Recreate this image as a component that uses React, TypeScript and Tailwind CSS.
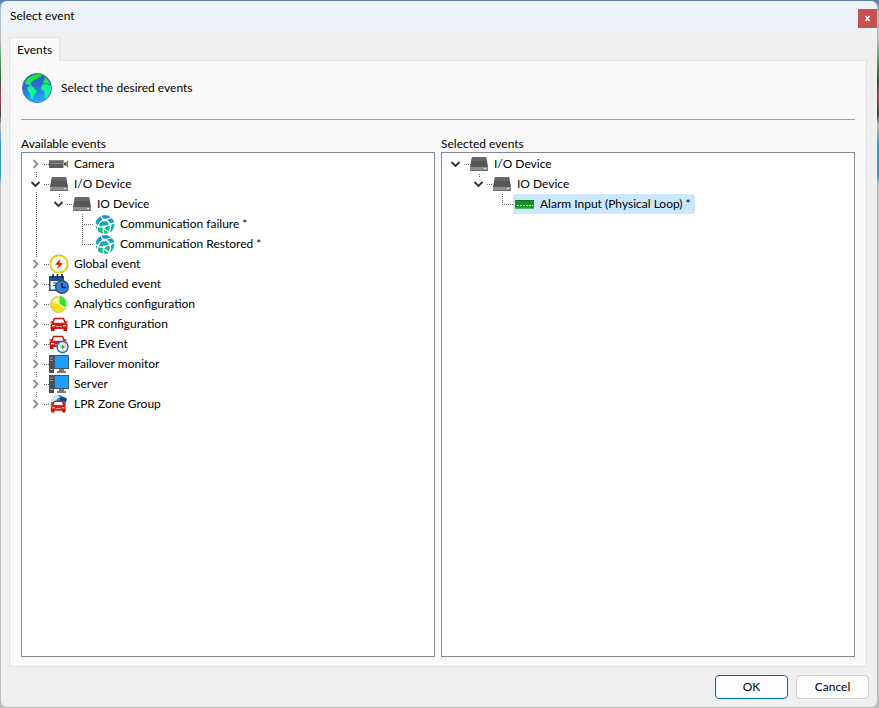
import React, { useState } from 'react';
import clsx from 'clsx';

type IconName =
  | 'camera'
  | 'device'
  | 'network'
  | 'global'
  | 'scheduled'
  | 'analytics'
  | 'car'
  | 'carEvent'
  | 'server'
  | 'carZone'
  | 'input';

type TreeItem = {
  id: string;
  label: string;
  icon: IconName;
  children?: TreeItem[];
};

const AVAILABLE: TreeItem[] = [
  { id: 'camera', label: 'Camera', icon: 'camera', children: [] },
  {
    id: 'io',
    label: 'I/O Device',
    icon: 'device',
    children: [
      {
        id: 'io-1',
        label: 'IO Device',
        icon: 'device',
        children: [
          { id: 'failure', label: 'Communication failure *', icon: 'network' },
          { id: 'restored', label: 'Communication Restored *', icon: 'network' },
        ],
      },
    ],
  },
  { id: 'global', label: 'Global event', icon: 'global', children: [] },
  { id: 'scheduled', label: 'Scheduled event', icon: 'scheduled', children: [] },
  { id: 'analytics', label: 'Analytics configuration', icon: 'analytics', children: [] },
  { id: 'lpr', label: 'LPR configuration', icon: 'car', children: [] },
  { id: 'lpr-event', label: 'LPR Event', icon: 'carEvent', children: [] },
  { id: 'failover', label: 'Failover monitor', icon: 'server', children: [] },
  { id: 'server', label: 'Server', icon: 'server', children: [] },
  { id: 'zone', label: 'LPR Zone Group', icon: 'carZone', children: [] },
];

const SELECTED: TreeItem[] = [
  {
    id: 'io',
    label: 'I/O Device',
    icon: 'device',
    children: [
      {
        id: 'io-1',
        label: 'IO Device',
        icon: 'device',
        children: [{ id: 'alarm', label: 'Alarm Input (Physical Loop) *', icon: 'input' }],
      },
    ],
  },
];

function GlobeIcon() {
  return (
    <svg className="size-8 shrink-0" viewBox="0 0 32 32">
      <defs>
        <linearGradient id="sea" x1="0" y1="0" x2="0.2" y2="1">
          <stop offset="0" stopColor="#2c4fae" />
          <stop offset="0.5" stopColor="#2a6fd0" />
          <stop offset="1" stopColor="#22a8ff" />
        </linearGradient>
        <linearGradient id="land" gradientUnits="userSpaceOnUse" x1="0" y1="2" x2="0" y2="28">
          <stop offset="0" stopColor="#1fe02c" />
          <stop offset="0.45" stopColor="#12f480" />
          <stop offset="1" stopColor="#08fca8" />
        </linearGradient>
      </defs>
      <circle cx="16" cy="16" r="14.6" fill="url(#sea)" stroke="#56749c" strokeWidth="0.9" />
      <g fill="url(#land)">
        <path d="M4 10 7 6l5-3 5-1 4 1-1 2-3 .5-1 1.500-3 .5-1 2-2 .5L9 12l2 1.500-1 .5-3-2-1.500 1z" />
        <path d="M7 14.500 10 14l3 1.500 1 2 2 1-1 3-2 1.500-1 3-1.500 1.500-1-2-.5-4L7 19l-.5-2.500z" />
        <path d="M23 5l2.500 1.500L28 10l.8 2-2.300-.5L25 11l-2 .5-1-2 1.500-1.500z" />
        <path d="M21 13l3-1.500 3 1 3 1.500.3 3-1.300 3.500-2 4L25 27l-1.500-1 .5-4-1-3-2-1-1-2.500z" />
      </g>
    </svg>
  );
}

function Car() {
  return (
    <g>
      <path d="M5.500 4.500h9l2 5h-13z" fill="#fff" stroke="#c9130b" strokeWidth="1.400" />
      <path d="M1.500 8h2.500M16 8h2.500" stroke="#c9130b" strokeWidth="1.400" />
      <path d="M3 9h14l1.500 1.500V15h-17v-4.500z" fill="#d91a10" />
      <path d="M2 14h3.500v3H2zM14.500 14H18v3h-3.500z" fill="#b3120a" />
      <path d="M3 11h3v1.300H3zM14 11h3v1.300h-3z" fill="#fff" />
      <path d="M7 12.500h6" stroke="#f8aaa5" />
    </g>
  );
}

function ItemIcon({ name }: { name: IconName }) {
  return (
    <svg className="size-5 shrink-0" viewBox="0 0 20 20">
      {name === 'camera' && (
        <g>
          <path d="M0 6h14.500v8H0z" fill="#5f5f5f" />
          <path d="M0 6h14.500v1.500H0z" fill="#858585" />
          <path d="M2 9.500h11" stroke="#8c8c8c" />
          <path d="M15 9l2.500-1.500v5L15 11z" fill="#4a4a4a" />
          <path d="M18.500 6.500v7" stroke="#777" />
        </g>
      )}
      {name === 'device' && (
        <g>
          <path d="M3 3h14l2 9.500H1z" fill="#575757" />
          <path d="M3 3h14l.8 4H2.200z" fill="#666" />
          <path d="M1 12.500h18V17H1z" fill="#8f8f8f" />
          <path d="M1 12.500h18" stroke="#5c5c5c" />
          <path d="M1 16.500h18" stroke="#6e6e6e" />
          <path d="M15 14.500h2" stroke="#eee" />
        </g>
      )}
      {name === 'network' && (
        <g>
          <defs>
            <linearGradient id="net" x1="0" y1="0" x2="0" y2="1">
              <stop offset="0" stopColor="#1c8fe0" />
              <stop offset="0.6" stopColor="#14b3a6" />
              <stop offset="1" stopColor="#16c47c" />
            </linearGradient>
          </defs>
          <circle cx="10" cy="10.500" r="9.500" fill="url(#net)" />
          <path
            d="M6 1c0 2 1 4 3 5l8-2.500M9 6c-3 1-5 3-6 6L0 10M9 6c3 0 5 2 6 5 1 3 0 6-1 8M15 10l5-1M3 12c3 2 6 1 12-1M9 12.500c-1 2-1 5 0 8M3 12l-1 5M9 15l6 4"
            fill="none"
            stroke="#fff"
            strokeWidth="1.300"
          />
          <g fill="#fff">
            <circle cx="9" cy="6" r="1.600" />
            <circle cx="15" cy="10.500" r="1.600" />
            <circle cx="9" cy="13" r="1.400" />
            <circle cx="3" cy="12" r="1.300" />
          </g>
        </g>
      )}
      {name === 'global' && (
        <g>
          <circle cx="10" cy="10" r="8.500" fill="#fff" stroke="#a99a35" strokeWidth="2" />
          <circle cx="10" cy="10" r="8.300" fill="#fffdf0" stroke="#f4df12" strokeWidth="1.500" />
          <path d="M11.500 5 6 10.500l3.500.5-1.500 4 6-5.500-3.500-.7z" fill="#dc1f14" />
        </g>
      )}
      {name === 'scheduled' && (
        <g>
          <path d="M0 2h15v15H0z" fill="#1f4f8d" />
          <path d="M1.500 7h12v8.500h-12z" fill="#f5f8fc" />
          <path d="M4 0v4M8.500 0v4M13 0v4" stroke="#222" strokeWidth="1.600" />
          <path d="M4 9h3v5.500M4 11.500h3" fill="none" stroke="#30506f" />
          <circle cx="13" cy="13" r="6.300" fill="#2685ee" stroke="#444" strokeWidth="1.300" />
          <path d="M13 9v4.500h4" fill="none" stroke="#0c1c33" strokeWidth="1.500" />
        </g>
      )}
      {name === 'analytics' && (
        <g>
          <circle cx="9.500" cy="10.500" r="8" fill="#f6df24" stroke="#bba745" strokeWidth="0.700" />
          <path d="M3 8a7 7 0 0 1 6-4v6z" fill="#fff59a" />
          <path d="M10 10V1.500a8 8 0 0 1 6.500 12.500z" fill="#2fe52f" stroke="#fff" strokeWidth="0.900" />
        </g>
      )}
      {name === 'car' && <Car />}
      {name === 'carEvent' && (
        <g>
          <g transform="translate(-1 -2)">
            <Car />
          </g>
          <circle cx="13.500" cy="13" r="5.500" fill="#f2f5f7" stroke="#176bd0" strokeWidth="1.400" />
          <path d="M13.500 13V8.500a4.500 4.500 0 0 1 4 6z" fill="#f7d9cd" />
          <path d="M11 12.500h2v-2l3 2.500-3 2.500v-2h-2z" fill="#39ad35" />
        </g>
      )}
      {name === 'server' && (
        <g>
          <path d="M0 1h5v18H0z" fill="#4b4f55" />
          <path d="M1 4h3M1 6.500h3" stroke="#9299a0" />
          <path d="M1.500 15.500h2" stroke="#d5d9dc" />
          <path d="M5 1h15v14H5z" fill="#4a5560" />
          <path d="M6 2h13v12H6z" fill="#1e9fff" />
          <path d="M10 15h5v2h2v2H8v-2h2z" fill="#767b80" />
        </g>
      )}
      {name === 'carZone' && (
        <g>
          <circle cx="9.500" cy="8.500" r="7.500" fill="#2c83ba" />
          <path d="M3 4 8 1l3 2-3 2-1 3H2z" fill="#d2ecf5" />
          <path d="M11 4c3-2 5-1 7 1l-1 3-3-1-3 1z" fill="#16458a" />
          <g transform="translate(.5 3.500) scale(.88)">
            <Car />
          </g>
        </g>
      )}
      {name === 'input' && (
        <g>
          <path d="M0 6h19v8.500H0z" fill="#149326" />
          <path d="M0 6h19v1H0z" fill="#0d7419" />
          <path d="M2 11.500h16" stroke="#d7f5d9" strokeDasharray="2 1" />
          <path d="M0 14h19" stroke="#39ab45" />
        </g>
      )}
    </svg>
  );
}

const DOTS = { stroke: '#6b6b6b', strokeDasharray: '1 1', fill: 'none' };

function Guide({ line }: { line: boolean }) {
  return (
    <svg className="h-5 w-[23px] shrink-0" viewBox="0 0 23 20">
      {line && <path d="M14.500 0v20" {...DOTS} />}
    </svg>
  );
}

function LeafGuide({ last }: { last: boolean }) {
  return (
    <svg className="h-5 w-[27px] shrink-0" viewBox="0 0 27 20">
      <path d={last ? 'M14.500 0v10' : 'M14.500 0v20'} {...DOTS} />
      <path d="M14 10.500h11" {...DOTS} />
    </svg>
  );
}

type RowProps = {
  item: TreeItem;
  guides: boolean[];
  first: boolean;
  last: boolean;
  collapsed: string[];
  selectedId?: string;
  onToggle: (id: string) => void;
};

function TreeRow({ item, guides, first, last, collapsed, selectedId, onToggle }: RowProps) {
  const kids = item.children;
  const open = !!kids && kids.length > 0 && !collapsed.includes(item.id);
  const selected = item.id === selectedId;

  return (
    <li role="treeitem" aria-expanded={kids ? open : undefined} aria-selected={selected}>
      <div className="flex h-5 items-center">
        {guides.map((line, i) => (
          <Guide key={i} line={line} />
        ))}
        {kids ? (
          <button
            type="button"
            aria-label={item.label}
            className="h-5 w-[27px] shrink-0"
            onClick={() => onToggle(item.id)}
          >
            <svg className="h-5 w-[27px]" viewBox="0 0 27 20">
              {!(first && guides.length === 0) && <path d="M14.500 0v3" {...DOTS} />}
              {!last && <path d="M14.500 18v2" {...DOTS} />}
              <path d="M22 10.500h5" {...DOTS} />
              {open ? (
                <path d="M9.500 8l4 4 4-4" fill="none" stroke="#303030" strokeWidth="1.800" />
              ) : (
                <path d="M11.500 6l4 4-4 4" fill="none" stroke="#8c8c8c" strokeWidth="1.800" />
              )}
            </svg>
          </button>
        ) : (
          <LeafGuide last={last} />
        )}
        <span
          className={clsx(
            'flex h-5 items-center gap-[5px] whitespace-nowrap',
            selected && '-ml-0.5 rounded-xs bg-[#cce8ff] pr-1 pl-0.5'
          )}
        >
          <ItemIcon name={item.icon} />
          {item.label}
        </span>
      </div>
      {open && (
        <ul role="group">
          {kids.map((kid, i) => (
            <TreeRow
              key={kid.id}
              item={kid}
              guides={[...guides, !last]}
              first={i === 0}
              last={i === kids.length - 1}
              collapsed={collapsed}
              selectedId={selectedId}
              onToggle={onToggle}
            />
          ))}
        </ul>
      )}
    </li>
  );
}

function EventTree({ title, items, selectedId }: { title: string; items: TreeItem[]; selectedId?: string }) {
  const [collapsed, setCollapsed] = useState<string[]>([]);

  const toggle = (id: string) => {
    setCollapsed((ids) => (ids.includes(id) ? ids.filter((x) => x !== id) : [...ids, id]));
  };

  return (
    <section className="flex min-w-0 flex-1 flex-col">
      <h2 className="h-4 leading-4">{title}</h2>
      <ul role="tree" aria-label={title} className="flex-1 overflow-auto border border-[#828790] bg-white pt-px">
        {items.map((item, i) => (
          <TreeRow
            key={item.id}
            item={item}
            guides={[]}
            first={i === 0}
            last={i === items.length - 1}
            collapsed={collapsed}
            selectedId={selectedId}
            onToggle={toggle}
          />
        ))}
      </ul>
    </section>
  );
}

export default function App() {
  return (
    <div className="flex h-screen flex-col bg-[linear-gradient(to_bottom,#5b7fae_1px,#a9c4c4_10px,#b5b9bd_40px,#4fa45a_60px,#3c4a40_82px,#a8444a_95px,#444_115px,#b8b8b8_125px,#3a93cf_145px,#3a93cf_175px,#bdbdbd_185px)] p-px pr-0.5 font-['Lato','Open_Sans',sans-serif] text-xs text-black">
      <div className="flex flex-1 flex-col overflow-hidden rounded-md bg-[#f0f0f0]">
        {/* Title bar */}
        <header className="flex h-[30px] shrink-0 items-center justify-between bg-[#eef3fa] pl-[9px]">
          <h1>Select event</h1>
          <button
            type="button"
            aria-label="Close"
            className="mt-1 flex h-[19px] w-[19px] items-center justify-center bg-[#c75050]"
          >
            <svg className="size-[7px]" viewBox="0 0 7 7">
              <path d="M1.500 1l4 5M5.500 1l-4 5" stroke="#fff" strokeWidth="1.500" />
            </svg>
          </button>
        </header>

        {/* Tabs */}
        <div role="tablist" className="flex shrink-0 px-2 pt-1.5">
          <button
            type="button"
            role="tab"
            aria-selected="true"
            className="z-10 -mb-px h-6 border border-b-0 border-[#e3e3e3] bg-[#f9f9f9] px-[7px]"
          >
            Events
          </button>
        </div>

        <main className="mr-2.5 ml-2 flex min-h-0 flex-1 flex-col border border-[#e3e3e3] bg-[#f9f9f9] px-[11px] pt-[11px] pb-[9px]">
          <div className="flex h-[47px] items-start gap-2">
            <GlobeIcon />
            <p className="leading-8">Select the desired events</p>
          </div>
          <hr className="border-[#a0a0a0]" />
          <div className="mt-4 flex min-h-0 flex-1 gap-1.5">
            <EventTree title="Available events" items={AVAILABLE} />
            <EventTree title="Selected events" items={SELECTED} selectedId="alarm" />
          </div>
        </main>

        {/* Dialog buttons */}
        <footer className="flex shrink-0 justify-end gap-2 py-2 pr-2">
          <button type="button" className="h-6 w-[73px] rounded border border-[#0067c0] bg-[#fdfdfd]">
            OK
          </button>
          <button type="button" className="h-6 w-[73px] rounded border border-[#d0d0d0] bg-[#fdfdfd]">
            Cancel
          </button>
        </footer>
      </div>
    </div>
  );
}
